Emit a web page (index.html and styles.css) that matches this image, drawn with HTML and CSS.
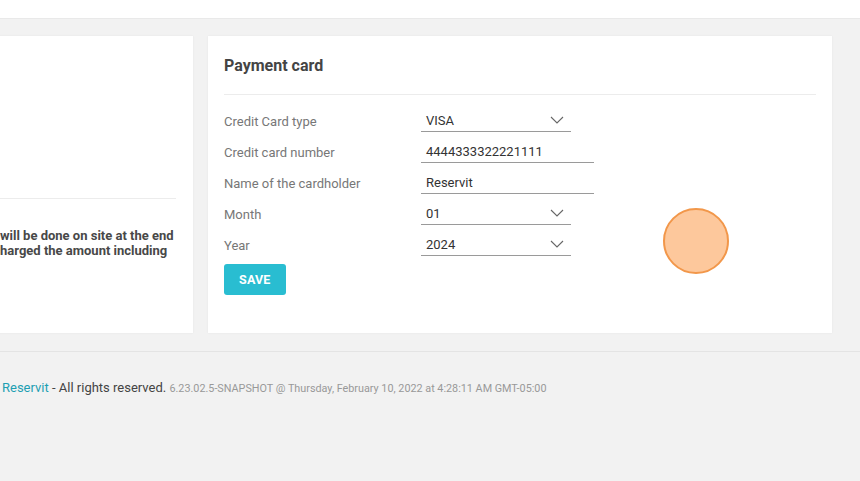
FILE: index.html
```html
<!DOCTYPE html>
<html lang="en">
<head>
<meta charset="utf-8">
<title>Payment card</title>
<link rel="stylesheet" href="styles.css">
</head>
<body>
<header class="topbar"></header>
<main class="content">
  <section class="card card-left">
    <hr class="rule rule-left">
    <div class="notice">
      <div class="line"><span class="pre">Payment&nbsp;</span>will be done on site at the end</div>
      <div class="line"><span class="pre">of your stay. You will be c</span>harged the amount including</div>
    </div>
  </section>
  <section class="card card-right">
    <h2 class="card-title">Payment card</h2>
    <hr class="rule">
    <form class="form">
      <div class="row">
        <label class="label">Credit Card type</label>
        <div class="field select">VISA<svg class="chev" width="14" height="8" viewBox="0 0 14 8"><path d="M1 1 L7 7 L13 1" fill="none" stroke="#666" stroke-width="1.1"/></svg></div>
      </div>
      <div class="row">
        <label class="label">Credit card number</label>
        <div class="field text">4444333322221111</div>
      </div>
      <div class="row">
        <label class="label">Name of the cardholder</label>
        <div class="field text">Reservit</div>
      </div>
      <div class="row">
        <label class="label">Month</label>
        <div class="field select">01<svg class="chev" width="14" height="8" viewBox="0 0 14 8"><path d="M1 1 L7 7 L13 1" fill="none" stroke="#666" stroke-width="1.1"/></svg></div>
      </div>
      <div class="row">
        <label class="label">Year</label>
        <div class="field select">2024<svg class="chev" width="14" height="8" viewBox="0 0 14 8"><path d="M1 1 L7 7 L13 1" fill="none" stroke="#666" stroke-width="1.1"/></svg></div>
      </div>
      <button type="button" class="btn">SAVE</button>
    </form>
  </section>
</main>
<footer class="footer">
  <p class="footer-text"><span class="fpre">© 2022&nbsp;</span><a class="link" href="#">Reservit</a> - All rights reserved. <span class="version">6.23.02.5-SNAPSHOT @ Thursday, February 10, 2022 at 4:28:11 AM GMT-05:00</span></p>
</footer>
<div class="touch"></div>
</body>
</html>
```
FILE: styles.css
```css
html, body {
  margin: 0;
  padding: 0;
}
body {
  background: #f2f2f2;
  font-family: Roboto, "Liberation Sans", Arial, sans-serif;
  color: #444;
  overflow: hidden;
  width: 860px;
  height: 481px;
  position: relative;
}
.topbar {
  height: 18px;
  background: #fff;
  border-bottom: 1px solid #e9e9e9;
}
.content {
  display: flex;
  gap: 15px;
  padding: 17px 28px 0 0;
  margin-left: -207px;
}
.card {
  background: #fff;
  box-shadow: 0 0 2px rgba(0,0,0,0.06);
  box-sizing: border-box;
}
.card-left {
  width: 400px;
  flex: none;
  padding: 0 17px 0 17px;
}
.card-right {
  flex: 1;
  padding: 20px 16px 38px 16px;
}
.rule {
  border: 0;
  border-top: 1px solid #ececec;
  margin: 0;
}
.rule-left {
  margin-top: 162px;
}
.notice {
  margin-top: 29px;
  font-size: 13px;
  font-weight: 700;
  line-height: 15px;
  color: #484848;
}
.line {
  white-space: nowrap;
}
.pre {
  display: inline-block;
  width: 190px;
  text-align: right;
}
.card-title {
  margin: 0 0 18px 0;
  font-size: 16px;
  line-height: 20px;
  font-weight: 700;
  color: #444;
}
.form {
  margin-top: 10px;
}
.row {
  display: flex;
  height: 27px;
  margin-bottom: 4px;
}
.label {
  width: 197px;
  flex: none;
  margin-top: 7px;
  line-height: 20px;
  font-size: 13px;
  color: #777;
}
.field {
  box-sizing: border-box;
  height: 27px;
  padding: 6px 0 0 5px;
  line-height: 20px;
  font-size: 13px;
  color: #333;
  border-bottom: 1px solid #9a9a9a;
  display: flex;
  align-items: flex-start;
}
.select {
  width: 150px;
  justify-content: space-between;
  padding-right: 7px;
}
.text {
  width: 173px;
}
.chev {
  margin-top: 5px;
}
.btn {
  margin-top: 4px;
  height: 31px;
  padding: 0 15px;
  border: 0;
  border-radius: 3px;
  background: #29bdd1;
  color: #fff;
  font-family: Roboto, "Liberation Sans", Arial, sans-serif;
  font-size: 12.5px;
  font-weight: 700;
  letter-spacing: 0.2px;
}
.footer {
  margin-top: 18px;
  border-top: 1px solid #e4e4e4;
}
.footer-text {
  margin: 0;
  padding-top: 27px;
  line-height: 17px;
  font-size: 13px;
  color: #444;
  white-space: nowrap;
}
.fpre {
  display: inline-block;
  width: 60px;
  margin-left: -58px;
  text-align: right;
}
.link {
  color: #1e9fb3;
  text-decoration: none;
}
.version {
  font-size: 10.8px;
  color: #999;
}
.touch {
  position: absolute;
  left: 663px;
  top: 208px;
  width: 62px;
  height: 62px;
  border: 2px solid #f2974a;
  border-radius: 50%;
  background: #fdc89c;
}
```
